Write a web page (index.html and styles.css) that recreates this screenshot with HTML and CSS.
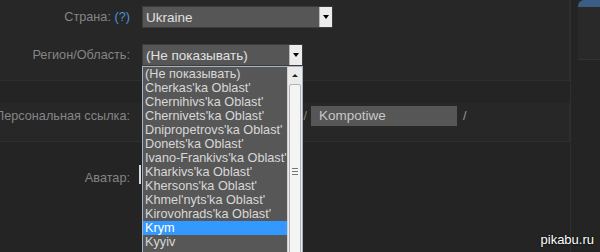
FILE: index.html
```html
<html><head>
<meta name="viewport" content="width=device-width, initial-scale=1">
<title>Редактирование профиля</title>
<meta http-equiv="Content-Type" content="text/html; charset=utf-8">
<link rel="stylesheet" href="styles.css">
</head><body>
<div class="page">
 <div class="main">
  <section class="panel panel-top">
   <div class="row row-country">
    <div class="label">Страна:&nbsp;<a class="help" href="#">(?)</a></div>
    <div class="select select-country">
     <span class="select-value">Ukraine</span>
     <span class="select-btn"><span class="arrow-down"></span></span>
    </div>
   </div>
   <div class="row row-region">
    <div class="label">Регион/Область:</div>
    <div class="select select-region">
     <span class="select-value">(Не показывать)</span>
     <span class="select-btn"><span class="arrow-down"></span></span>
     <div class="dropdown">
      <ul class="options">
       <li>(Не показывать)</li>
       <li>Cherkas'ka Oblast'</li>
       <li>Chernihivs'ka Oblast'</li>
       <li>Chernivets'ka Oblast'</li>
       <li>Dnipropetrovs'ka Oblast'</li>
       <li>Donets'ka Oblast'</li>
       <li>Ivano-Frankivs'ka Oblast'</li>
       <li>Kharkivs'ka Oblast'</li>
       <li>Khersons'ka Oblast'</li>
       <li>Khmel'nyts'ka Oblast'</li>
       <li>Kirovohrads'ka Oblast'</li>
       <li class="selected">Krym</li>
       <li>Kyyiv</li>
      </ul>
      <div class="scrollbar">
       <div class="scroll-up"><span class="arrow-up"></span></div>
       <div class="scroll-thumb"><span class="grip"></span></div>
      </div>
     </div>
    </div>
   </div>
  </section>

  <section class="panel panel-link">
   <div class="row row-link">
    <div class="label">Персональная ссылка:</div>
    <div class="link-field">
     <span class="link-prefix">http://steamcommunity.com/id/</span>
     <span class="input">Kompotiwe</span>
     <span class="link-suffix">/</span>
    </div>
   </div>
  </section>

  <div class="row row-avatar">
   <div class="label">Аватар:</div>
   <div class="avatar-box"></div>
  </div>
 </div>

 <aside class="side">
  <div class="side-card">
   <span class="side-title">Names</span>
  </div>
 </aside>

 <div class="watermark">pikabu.ru</div>
</div>
</body></html>
```

FILE: styles.css
```css
html, body {
	margin: 0;
	height: 100%;
	overflow: hidden;
}

body {
	background-color: #242424;
	font-family: "Liberation Sans", Arial, sans-serif;
	font-size: 12.7px;
	color: #858585;
}

.page {
	display: flex;
	height: 252px;
	position: relative;
	overflow: hidden;
}

.main {
	width: 570px;
	flex: none;
}

.panel {
	background-color: #272727;
	border-right: 1px solid #2e2e2e;
	border-bottom: 1px solid #2e2e2e;
}

.panel-top {
	height: 74px;
	padding-top: 6px;
}

.panel-link {
	margin-top: 22px;
	height: 35px;
	padding-top: 3px;
}

.row {
	display: grid;
	grid-template-columns: 130px auto;
	column-gap: 12px;
	align-items: center;
}

.row-region {
	margin-top: 16px;
}

.row-avatar {
	margin-top: 29px;
	align-items: start;
}

.label {
	display: flex;
	justify-content: flex-end;
	white-space: nowrap;
	color: #858585;
}

.help {
	color: #4b94d4;
	text-decoration: none;
}

/* closed select */
.select {
	position: relative;
	display: flex;
	align-items: center;
	background-color: #565656;
	border: 1px solid #3c3c3c;
	color: #e0e0e0;
	font-size: 13.5px;
	box-sizing: border-box;
}

.select-country {
	width: 191px;
	height: 22px;
}

.select-region {
	width: 161px;
	height: 22px;
}

.select-value {
	flex: 1;
	padding-left: 3px;
	white-space: nowrap;
}

.select-btn {
	width: 12px;
	height: 20px;
	display: flex;
	align-items: center;
	justify-content: center;
	background-color: #ececec;
	border-left: 1px solid #b8b8b8;
}

.arrow-down {
	width: 0;
	height: 0;
	border-left: 3px solid transparent;
	border-right: 3px solid transparent;
	border-top: 4px solid #000;
}

/* open list */
.dropdown {
	position: absolute;
	top: 21px;
	left: -1px;
	width: 161px;
	height: 200px;
	display: flex;
	background-color: #575757;
	border: 1px solid #a4b2c2;
	border-bottom: none;
	box-sizing: border-box;
	font-size: 12.7px;
	z-index: 5;
}

.options {
	flex: 1;
	margin: 0;
	padding: 0;
	list-style: none;
	overflow: hidden;
}

.options li {
	height: 14px;
	line-height: 14px;
	padding-left: 2px;
	color: #d8d8d8;
	white-space: nowrap;
}

.options li.selected {
	background-color: #3399ff;
	color: #fff;
}

.scrollbar {
	width: 14px;
	flex: none;
	display: flex;
	flex-direction: column;
	background-color: #ebebeb;
	border-left: 1px solid #d0d0d0;
}

.scroll-up {
	height: 16px;
	flex: none;
	display: flex;
	align-items: center;
	justify-content: center;
}

.arrow-up {
	width: 0;
	height: 0;
	border-left: 3px solid transparent;
	border-right: 3px solid transparent;
	border-bottom: 3px solid #222;
}

.scroll-thumb {
	height: 172px;
	flex: none;
	margin: 1px 1px 0 1px;
	display: flex;
	align-items: center;
	justify-content: center;
	background-color: #f4f4f4;
	border: 1px solid #b4b4b4;
	border-radius: 2px;
}

.grip {
	width: 6px;
	height: 5px;
	border-top: 1px solid #777;
	border-bottom: 1px solid #777;
	background: linear-gradient(#777, #777) center / 6px 1px no-repeat;
}

/* personal link */
.link-field {
	display: flex;
	align-items: center;
	white-space: nowrap;
}

.link-prefix {
	width: 165px;
	overflow: hidden;
	display: flex;
	justify-content: flex-end;
	color: #858585;
}

.input {
	width: 138px;
	height: 20px;
	line-height: 20px;
	margin-left: 4px;
	padding-left: 8px;
	background-color: #565656;
	color: #c8c8c8;
	font-size: 13.5px;
}

.link-suffix {
	margin-left: 6px;
	color: #9a9a9a;
}

.avatar-box {
	width: 60px;
	height: 19px;
	margin-top: -6px;
	margin-left: -3px;
	border-left: 2px solid #d8d8d8;
}

/* right column */
.side {
	flex: 1;
	border-left: 1px solid #2f2f2f;
}

.side-card {
	margin-left: 7px;
	height: 52px;
	background-color: #292929;
	border-top: 7px solid #3b5c85;
	border-top-left-radius: 6px;
	border-bottom: 1px solid #333;
	overflow: hidden;
}

.side-title {
	display: block;
	padding: 12px 0 0 27px;
	color: #fff;
	font-weight: bold;
	font-size: 13px;
}

.watermark {
	position: absolute;
	right: 6px;
	bottom: 5px;
	color: #fff;
	font-size: 13px;
	text-shadow: 0 0 2px #000;
}
```
